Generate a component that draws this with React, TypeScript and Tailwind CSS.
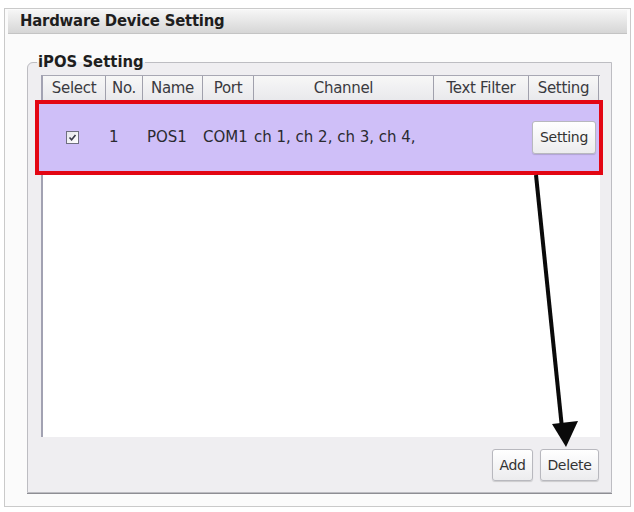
import React from 'react'

// column layout shared by the header and the rows
const columns = [
  { key: 'select', label: 'Select', width: 'w-[63px]' },
  { key: 'no', label: 'No.', width: 'w-[37px]' },
  { key: 'name', label: 'Name', width: 'w-[60px]' },
  { key: 'port', label: 'Port', width: 'w-[51px]' },
  { key: 'channel', label: 'Channel', width: 'w-[180px]' },
  { key: 'filter', label: 'Text Filter', width: 'w-[95px]' },
  { key: 'setting', label: 'Setting', width: 'w-[70px]' },
]

const devices = [{ no: 1, name: 'POS1', port: 'COM1', channels: 'ch 1, ch 2, ch 3, ch 4,', checked: true }]

function CheckBox({ checked }: { checked: boolean }) {
  return (
    <span className="flex h-[13px] w-[13px] items-center justify-center border border-[#6f6f80] bg-gradient-to-br from-[#e4e4ea] to-[#ffffff]">
      {checked && (
        <svg width="9" height="9" viewBox="0 0 9 9">
          <path d="M1.5 4.5 L3.6 6.8 L7.5 2" fill="none" stroke="#3a3a4a" strokeWidth="1.6" />
        </svg>
      )}
    </span>
  )
}

function WinButton({ children, className = '' }: { children: React.ReactNode; className?: string }) {
  return (
    <button
      className={`flex items-center justify-center rounded-[3px] border border-[#b8b8be] bg-gradient-to-b from-[#ffffff] to-[#ececee] text-[14px] tracking-[-0.3px] text-[#333] shadow-[0_1px_1px_rgba(0,0,0,0.15)] ${className}`}
    >
      {children}
    </button>
  )
}

// pointer drawn from the selected row down to the Delete button
function Arrow() {
  return (
    <svg className="pointer-events-none absolute left-0 top-0" width="634" height="512" viewBox="0 0 634 512">
      <line x1="536" y1="175" x2="562" y2="428" stroke="#0a0a0a" strokeWidth="4" />
      <polygon points="552,424 578,421 566,447" fill="#0a0a0a" />
    </svg>
  )
}

export default function App() {
  return (
    <div className="relative h-[512px] w-[634px] bg-white pl-[4px] pr-[3px] pt-[8px] font-['DejaVu_Sans',sans-serif] text-[#2a2a30]">
      <div className="flex h-[499px] flex-col border border-[#cacaca] bg-[#fbfbfb]">
        {/* panel title bar */}
        <div className="mx-[3px] mt-[1px] flex h-[24px] items-center border-b border-[#c4c4c4] bg-gradient-to-b from-[#f6f6f6] via-[#e6e6e6] to-[#d6d6d6] pl-[12px] font-['DejaVu_Sans_Condensed','DejaVu_Sans',sans-serif] text-[16.5px] font-bold tracking-[-0.2px] text-[#1e1e1e]">
          Hardware Device Setting
        </div>

        {/* iPOS group box */}
        <fieldset className="ml-[22px] mr-[18px] mt-[20px] h-[439px] min-w-0 rounded-tl-[6px] border border-[#bdbdc2] bg-[#efeef1] pb-[11px] pl-[13px] pr-[11px] pt-[5px] shadow-[0_1px_0_#8e8e94]">
          <legend className="-ml-[4px] px-[1px] font-['DejaVu_Sans_Condensed','DejaVu_Sans',sans-serif] text-[16.5px] font-bold leading-[16px] text-[#1e1e1e]">
            iPOS Setting
          </legend>

          <div className="flex h-[362px] flex-col border-l-2 border-[#a2a2b2] bg-white">
            {/* column header */}
            <div className="flex h-[25px] border-t border-[#a8a8b4] bg-gradient-to-b from-[#f7f7f7] to-[#e9e9ec]">
              {columns.map((c) => (
                <div
                  key={c.key}
                  className={`${c.width} flex shrink-0 items-center justify-center whitespace-nowrap border-r border-[#a0a0ac] text-[15px] tracking-[-0.3px] text-[#3a3a40]`}
                >
                  {c.label}
                </div>
              ))}
            </div>

            {/* device rows */}
            {devices.map((d) => (
              <div
                key={d.no}
                className="-ml-[8px] -mr-[3px] flex h-[75px] items-center border-4 border-[#e30613] bg-[#cfbff8] text-[15px]"
              >
                <div className="flex w-[67px] shrink-0 justify-center">
                  <CheckBox checked={d.checked} />
                </div>
                <div className="w-[37px] shrink-0 pl-[3px]">{d.no}</div>
                <div className="w-[60px] shrink-0 pl-[4px]">{d.name}</div>
                <div className="w-[51px] shrink-0">{d.port}</div>
                <div className="w-[180px] shrink-0 whitespace-nowrap">{d.channels}</div>
                <div className="w-[95px] shrink-0" />
                <div className="flex w-[70px] shrink-0 justify-center">
                  <WinButton className="h-[33px] w-[64px]">Setting</WinButton>
                </div>
              </div>
            ))}
          </div>

          <div className="mt-[12px] flex justify-end gap-[7px] pr-[1px]">
            <WinButton className="h-[32px] w-[41px]">Add</WinButton>
            <WinButton className="h-[32px] w-[59px]">Delete</WinButton>
          </div>
        </fieldset>
      </div>
      <Arrow />
    </div>
  )
}
